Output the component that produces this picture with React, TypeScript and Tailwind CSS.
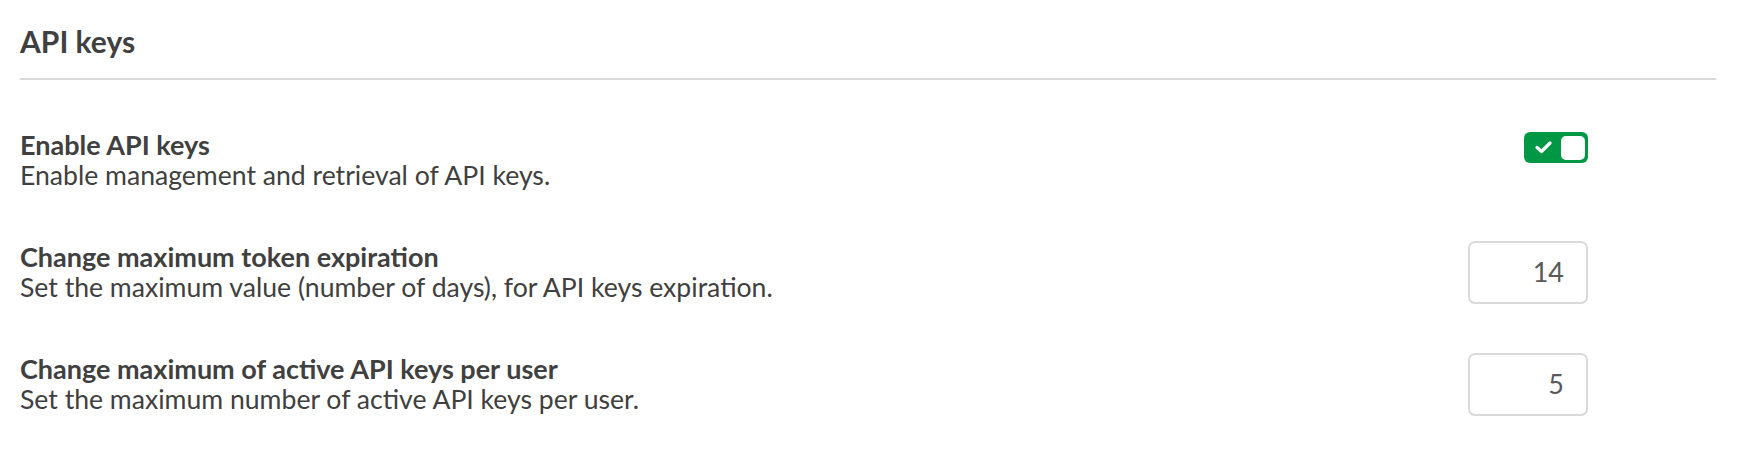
function Toggle() {
  return (
    <div className="relative mt-[3px] h-[31px] w-[64px] shrink-0 rounded-[6px] bg-[#009845]">
      <svg
        className="absolute left-[11px] top-[9px]"
        width="17"
        height="13"
        viewBox="0 0 17 13"
        fill="none"
      >
        <path
          d="M2 6.5 L6.5 10.5 L15 2"
          stroke="white"
          strokeWidth="3.2"
          strokeLinecap="round"
          strokeLinejoin="round"
        />
      </svg>
      <div className="absolute right-[3px] top-[4px] h-[24px] w-[24px] rounded-[5px] bg-white" />
    </div>
  );
}

function NumberBox({ value }: { value: string }) {
  return (
    <div className="flex h-[63px] w-[120px] shrink-0 items-center justify-end rounded-[7px] border-2 border-[#dadada] bg-white pr-[22px] text-[27px] text-[#595959]">
      {value}
    </div>
  );
}

function Row({
  title,
  desc,
  control,
}: {
  title: string;
  desc: string;
  control: React.ReactNode;
}) {
  return (
    <div className="flex items-start justify-between">
      <div className="flex min-h-[63px] flex-col">
        <div className="text-[27px] font-bold leading-[31px] text-[#404040]">{title}</div>
        <div className="text-[26.6px] leading-[31px] text-[#404040]">{desc}</div>
      </div>
      {control}
    </div>
  );
}

export default function App() {
  return (
    <div
      className="min-h-[458px] w-full bg-white pl-[20px] pr-[24px]"
      style={{ fontFamily: "Lato, 'Noto Sans', sans-serif" }}
    >
      <div className="border-b-2 border-[#d9d9d9] pb-[19px] pt-[23px]">
        <h1 className="text-[30px] font-bold leading-[36px] text-[#404040]">API keys</h1>
      </div>
      <div className="flex flex-col gap-[49px] pr-[128px] pt-[49px]">
        <Row
          title="Enable API keys"
          desc="Enable management and retrieval of API keys."
          control={<Toggle />}
        />
        <Row
          title="Change maximum token expiration"
          desc="Set the maximum value (number of days), for API keys expiration."
          control={<NumberBox value="14" />}
        />
        <Row
          title="Change maximum of active API keys per user"
          desc="Set the maximum number of active API keys per user."
          control={<NumberBox value="5" />}
        />
      </div>
    </div>
  );
}
